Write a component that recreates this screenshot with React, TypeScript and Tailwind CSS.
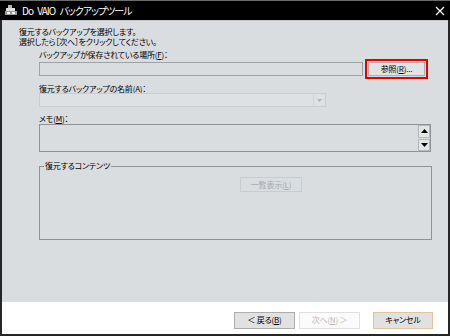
import React from "react";

const jp = "font-['Noto_Sans_CJK_JP','Noto_Sans',sans-serif] [font-feature-settings:'palt']";

function AppIcon() {
  return (
    <svg width="12" height="11" viewBox="0 0 12 11">
      <rect x="3" y="0" width="4" height="3" fill="#b8b8b8" />
      <rect x="1" y="3" width="9" height="3" fill="#e0e0e0" />
      <rect x="0" y="6" width="12" height="4" fill="#9a9a9a" />
      <rect x="2" y="7" width="3" height="2" fill="#ffffff" />
      <rect x="7" y="7" width="3" height="2" fill="#ffffff" />
    </svg>
  );
}

function CloseIcon() {
  return (
    <svg width="10" height="10" viewBox="0 0 10 10">
      <path d="M1 1 L9 9 M9 1 L1 9" stroke="#ffffff" strokeWidth="1.2" />
    </svg>
  );
}

function Label({ children, className = "" }: { children: React.ReactNode; className?: string }) {
  return <div className={`text-[8px] leading-[10px] tracking-[-0.2px] text-black ${className}`}>{children}</div>;
}

export default function App() {
  return (
    <div className={`w-[450px] h-[336px] bg-[#262626] flex flex-col overflow-hidden ${jp}`}>
      {/* title bar */}
      <div className="h-[20px] bg-black flex items-center pl-[5px] pr-[4px] border-t border-[#6a6a6a]">
        <AppIcon />
        <span className="ml-[5px] text-white text-[10px] leading-[12px] tracking-[-1px] [word-spacing:3px]">Do VAIO バックアップツール</span>
        <div className="ml-auto mr-[1px]">
          <CloseIcon />
        </div>
      </div>

      {/* body */}
      <div className="flex-1 mx-[2px] bg-[#d9dde0] border-t border-[#c2c8cd] pl-[17px] pr-[16px] pt-[6px] flex flex-col">
        <Label>
          復元するバックアップを選択します。
          <br />
          選択したら［次へ］をクリックしてください。
        </Label>

        <div className="ml-[20px] flex flex-col">
          <Label className="mt-[3px]">バックアップが保存されている場所(<u>F</u>)：</Label>
          <div className="mt-[-1px] h-[20px] flex items-center">
            <div className="flex-1 h-[14px] border border-[#9ea2a6] bg-[#d9dde0]" />
            <div className="ml-[2px] mr-[4px] w-[63px] h-[20px] border-2 border-[#e60000] p-[1px]">
              <div className="h-full bg-[#e1e3e5] border border-[#adadad] flex items-center justify-center text-[8px] leading-[10px] tracking-[-0.2px] text-black">
                参照(<u>R</u>)...
              </div>
            </div>
          </div>

          <Label className="mt-[5px]">復元するバックアップの名前(<u>A</u>)：</Label>
          <div className="mt-[-1px] w-[287px] h-[14px] border border-[#c9cdd0] bg-[#dee1e4] flex justify-end">
            <div className="w-[12px] h-full border-l border-[#cfd3d6] flex items-center justify-center">
              <svg width="5" height="3" viewBox="0 0 5 3">
                <path d="M0 0 H5 L2.5 3 Z" fill="#b0b3b6" />
              </svg>
            </div>
          </div>

          <Label className="mt-[7px]">メモ(<u>M</u>)：</Label>
          <div className="mr-[1px] h-[28px] border border-[#8f9397] bg-[#d9dde0] flex justify-end">
            <div className="w-[12px] flex flex-col gap-[1px]">
              <div className="flex-1 bg-[#e3e5e7] border border-[#b4b8bc] flex items-center justify-center">
                <svg width="7" height="4" viewBox="0 0 7 4">
                  <path d="M0 4 L3.5 0 L7 4 Z" fill="#000" />
                </svg>
              </div>
              <div className="flex-1 bg-[#e3e5e7] border border-[#b4b8bc] flex items-center justify-center">
                <svg width="7" height="4" viewBox="0 0 7 4">
                  <path d="M0 0 H7 L3.5 4 Z" fill="#000" />
                </svg>
              </div>
            </div>
          </div>

          <div className="relative mt-[14px] h-[74px] border border-[#8f9397]">
            <div className="absolute left-[4px] top-[-6px] px-[1px] bg-[#d9dde0] text-[8px] leading-[10px] tracking-[-0.2px] text-black">
              復元するコンテンツ
            </div>
            <div className="ml-[200px] mt-[10px] w-[62px] h-[15px] border border-[#c8ccd0] flex items-center justify-center text-[8px] leading-[10px] tracking-[-0.2px] text-[#a4a8ac]">
              一覧表示(<u>L</u>)
            </div>
          </div>
        </div>
      </div>

      {/* footer */}
      <div className="h-[32px] mx-[2px] mb-[2px] bg-white flex items-center justify-end pr-[15px] pt-[4px]">
        <div className="w-[61px] h-[17px] bg-[#e1e1e1] border border-[#adadad] flex items-center justify-center text-[8px] leading-[10px] tracking-[-0.2px] text-black">
          ＜ 戻る(<u>B</u>)
        </div>
        <div className="ml-[4px] w-[61px] h-[17px] bg-[#fbfbfb] border border-[#e0e0e0] flex items-center justify-center text-[8px] leading-[10px] tracking-[-0.2px] text-[#b8b8b8]">
          次へ(<u>N</u>) ＞
        </div>
        <div className="ml-[13px] w-[60px] h-[17px] bg-[#e1e1e1] border border-[#e0c49e] flex items-center justify-center text-[8px] leading-[10px] tracking-[-0.2px] text-black">
          キャンセル
        </div>
      </div>
    </div>
  );
}
